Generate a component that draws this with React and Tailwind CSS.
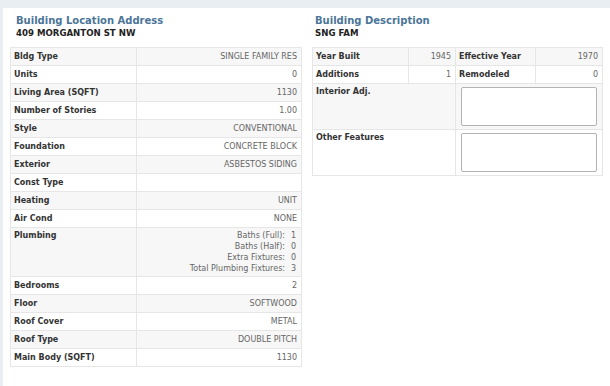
import React from "react";

const details = [
  ["Bldg Type", "SINGLE FAMILY RES"],
  ["Units", "0"],
  ["Living Area (SQFT)", "1130"],
  ["Number of Stories", "1.00"],
  ["Style", "CONVENTIONAL"],
  ["Foundation", "CONCRETE BLOCK"],
  ["Exterior", "ASBESTOS SIDING"],
  ["Const Type", ""],
  ["Heating", "UNIT"],
  ["Air Cond", "NONE"],
  ["Plumbing", null],
  ["Bedrooms", "2"],
  ["Floor", "SOFTWOOD"],
  ["Roof Cover", "METAL"],
  ["Roof Type", "DOUBLE PITCH"],
  ["Main Body (SQFT)", "1130"],
];

const plumbing = [
  ["Baths (Full):", "1"],
  ["Baths (Half):", "0"],
  ["Extra Fixtures:", "0"],
  ["Total Plumbing Fixtures:", "3"],
];

const labelCls = "border border-[#e6e6e6] px-[3px] font-bold text-[#333] text-left leading-[12px]";
const valueCls = "border border-[#e6e6e6] px-[4px] text-right text-[#666] leading-[12px]";

function Heading({ title, sub, indent }) {
  return (
    <div className={`${indent} pt-[1px] mb-[8px]`}>
      <h2 className="text-[10px] leading-[13px] font-bold text-[#4b7598]">{title}</h2>
      <div className="text-[8.6px] leading-[12px] font-bold text-[#222]">{sub}</div>
    </div>
  );
}

function PlumbingList() {
  return (
    <table className="ml-auto border-collapse">
      <tbody>
        {plumbing.map(([k, v]) => (
          <tr key={k}>
            <td className="text-right pr-[6px] leading-[11px] p-0">{k}</td>
            <td className="text-left leading-[11px] w-[6px] p-0">{v}</td>
          </tr>
        ))}
      </tbody>
    </table>
  );
}

function LocationPanel() {
  return (
    <div className="w-[292px]">
      <Heading title="Building Location Address" sub="409 MORGANTON ST NW" indent="pl-[6px]" />
      <table className="w-full border-collapse table-fixed">
        <colgroup>
          <col className="w-[126px]" />
          <col />
        </colgroup>
        <tbody>
          {details.map(([label, value], i) => (
            <tr key={label} className={i % 2 === 0 ? "bg-[#f7f7f7]" : "bg-white"}>
              {value === null ? (
                <>
                  <td className={`${labelCls} align-top pt-[2px] pb-[2px]`}>{label}</td>
                  <td className={`${valueCls} align-top pt-[2px] pb-[2px]`}>
                    <PlumbingList />
                  </td>
                </>
              ) : (
                <>
                  <td className={`${labelCls} align-middle h-[18px] py-0`}>{label}</td>
                  <td className={`${valueCls} align-middle py-0`}>{value}</td>
                </>
              )}
            </tr>
          ))}
        </tbody>
      </table>
    </div>
  );
}

function NoteBox() {
  return (
    <textarea
      readOnly
      className="block w-full h-[39px] bg-white border border-[#b3b3b3] rounded-[2px] resize-none"
    />
  );
}

function DescriptionPanel() {
  return (
    <div className="w-[291px]">
      <Heading title="Building Description" sub="SNG FAM" indent="pl-[3px]" />
      <table className="w-full border-collapse table-fixed">
        <colgroup>
          <col className="w-[96px]" />
          <col className="w-[47px]" />
          <col className="w-[80px]" />
          <col />
        </colgroup>
        <tbody>
          <tr className="bg-[#f7f7f7]">
            <td className={`${labelCls} align-middle h-[18px]`}>Year Built</td>
            <td className={`${valueCls} align-middle`}>1945</td>
            <td className={`${labelCls} align-middle`}>Effective Year</td>
            <td className={`${valueCls} align-middle`}>1970</td>
          </tr>
          <tr className="bg-white">
            <td className={`${labelCls} align-middle h-[18px]`}>Additions</td>
            <td className={`${valueCls} align-middle`}>1</td>
            <td className={`${labelCls} align-middle`}>Remodeled</td>
            <td className={`${valueCls} align-middle`}>0</td>
          </tr>
          <tr className="bg-[#f7f7f7]">
            <td colSpan={2} className={`${labelCls} align-top pt-[2px]`}>Interior Adj.</td>
            <td colSpan={2} className="border border-[#e6e6e6] px-[5px] py-[3px] leading-[0]">
              <NoteBox />
            </td>
          </tr>
          <tr className="bg-white">
            <td colSpan={2} className={`${labelCls} align-top pt-[2px]`}>Other Features</td>
            <td colSpan={2} className="border border-[#e6e6e6] px-[5px] py-[3px] leading-[0]">
              <NoteBox />
            </td>
          </tr>
        </tbody>
      </table>
    </div>
  );
}

export default function App() {
  return (
    <div className="w-[610px] h-[386px] bg-[#e9eef2] pt-[8px] pl-[3px] overflow-hidden font-['DejaVu_Sans',Verdana,sans-serif] text-[8px]">
      <div className="h-full bg-white pl-[7px] pt-[5px] flex gap-[10px]">
        <LocationPanel />
        <DescriptionPanel />
      </div>
    </div>
  );
}
